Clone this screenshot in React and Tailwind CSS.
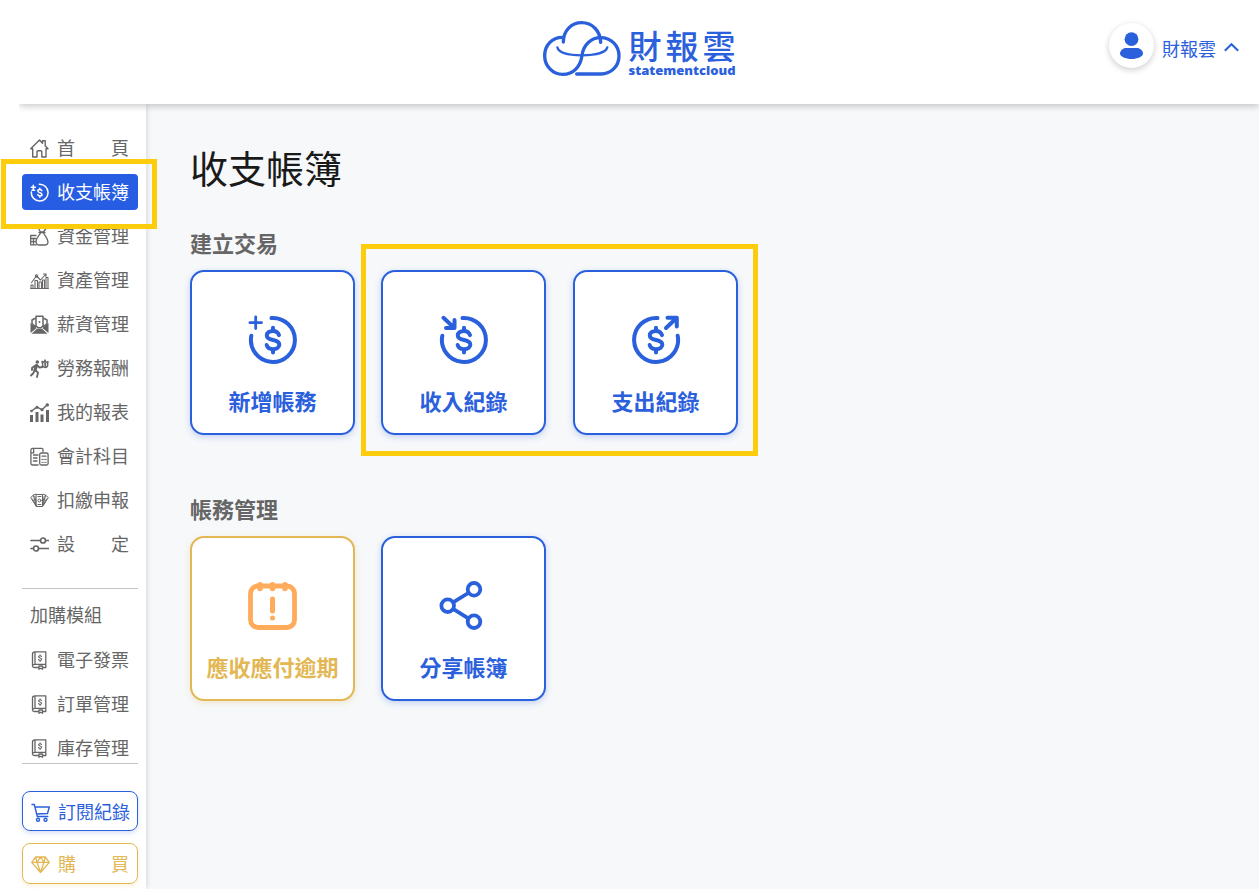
import React, { useState } from 'react';

// ===== Sidebar icons (19 x 19) =====
function Icon({ children, width = 1.4 }) {
  return (
    <svg className="h-[19px] w-[19px] shrink-0" viewBox="0.5 0 19 19" fill="none" stroke="currentColor"
      strokeWidth={width} strokeLinecap="round" strokeLinejoin="round" aria-hidden="true">
      {children}
    </svg>
  );
}

const HomeIcon = () => (
  <Icon>
    <path d="M3.200 9.800H1.200L10 1l3 3.200V1.800h2.700v5l2.800 3h-2V18h-4.200v-5.200c0-.6-.4-1-1-1H8.500c-.6 0-1 .4-1 1V18H3.200z" />
  </Icon>
);

const LedgerIcon = () => (
  <Icon width={1.5}>
    <path d="M9.800 1.200a8.400 8.400 0 1 1-8 7.800" />
    <path d="M1.800 4.200h4M3.800 2.200v4M2.500 7.300h2.600" />
    <path d="M12.300 7.700c-.4-.8-1.100-1.100-2-1.100-1.200 0-2 .6-2 1.500 0 2.100 4.200 1 4.200 3.300 0 .9-.9 1.500-2.100 1.500-1 0-1.800-.4-2.200-1.200M10.300 5.300v1.200M10.300 13v1.200" />
  </Icon>
);

const FundIcon = () => (
  <Icon width={1.3}>
    <path d="M9 1.500l2 3.500h3l2.500-3.500M9.500 5.500h6M11 6c-1.500 3-4.500 5-4.500 8.500 0 2.500 1.500 3.500 3.500 3.500h5c2 0 3.500-1 3.500-3 0-3.500-3-6-4.500-9" />
    <path d="M6.500 8.500H1.200v9.300h5.500M1.200 11.500h5M1.200 14.600h5M4 11.500v6" />
  </Icon>
);

const AssetIcon = () => (
  <Icon width={1.1}>
    <path d="M1 17.500h18M1.500 17v-3h2v3M5.500 17V9.500H8V17M9.500 17v-6H12v6M13 17V9h2v8M16.500 17V6.500h2V17" />
    <path d="M2 11.500L7 5l4 4 5.500-6M14 3h2.500v2.500" />
    <circle cx="7" cy="5" r="1.200" />
  </Icon>
);

const SalaryIcon = () => (
  <Icon width={1.5}>
    <path d="M1 8l6.200 5L1 18zM19 8l-6.200 5 6.200 5zM2 18.800l5.500-5h5l5.500 5z" fill="currentColor" stroke="none" />
    <path d="M6.500 1.300h7v9.500l-2 2h-3l-2-2zM5.200 3.500L2.500 5v3.500l3.200 3M14.800 3.500L17.500 5v3.500l-3.200 3" />
    <circle cx="10" cy="7" r="1" fill="currentColor" stroke="none" />
  </Icon>
);

const LaborIcon = () => (
  <Icon>
    <circle cx="7.800" cy="3" r="1.800" fill="currentColor" stroke="none" />
    <path d="M7 6.500L5.500 11" strokeWidth="3.200" />
    <path d="M5 11.500L4 14l-2.500 2.500M6 11.500l2.500 2-1 4.500M5 7L2.500 9v2M8 6.500l2 2 3-.5" strokeWidth="1.800" />
    <path d="M13 4.500l-.5-2 2 1 1-2.500 1.200 2.500 1.800-1-.3 2.500c.3 2-.7 3.500-2.500 3.500S12.700 7 13 4.500z" />
    <path d="M15.700 4.500v2.500" strokeWidth="1.800" />
  </Icon>
);

const ReportIcon = () => (
  <Icon>
    <path d="M.5 12h3v7h-3zM6 9h3v10H6zM11 11.500h3V19h-3zM16.500 7h3v12h-3z" fill="currentColor" stroke="none" />
    <path d="M2 8l5.500-3.800 5 2.500L18 1.500" strokeWidth="1.500" />
    <circle cx="2" cy="8" r="1.300" fill="currentColor" stroke="none" />
    <circle cx="7.500" cy="4.200" r="1.500" fill="currentColor" stroke="none" />
    <circle cx="12.500" cy="6.700" r="1.500" fill="currentColor" stroke="none" />
    <circle cx="17.800" cy="1.900" r="1.700" fill="currentColor" stroke="none" />
  </Icon>
);

const AccountIcon = () => (
  <Icon width={1.3}>
    <path d="M8.500 18H3.200c-1.100 0-1.800-.7-1.800-1.800V5.500M13.500 4.500V2.800c0-.8-.6-1.400-1.400-1.400H3c-1 0-1.600.8-1.600 1.800v2.600h2.800V3.200c0-1-.3-1.600-1-1.800M4 8h4.500M4 11h3.500M4 14h3.500" />
    <rect x="10.200" y="6" width="8.400" height="12" rx="1.500" />
    <path d="M12.500 9.200h4M12.500 12.500h.2M14.400 12.500h.2M16.300 12.500h.2M12.500 15.300h.2M14.400 15.300h.2M16.300 15.300h.2" />
  </Icon>
);

const WithholdIcon = () => (
  <Icon width={1}>
    <path d="M7 3.500h6v12H7zM6.500 3.200l-2.700.8 3 11M13.500 3.200l2.700.8-3 11M3.500 4.500L1.200 6.500l5 8M16.500 4.500l2.300 2-5 8M3 8l3.500 6.500M17 8l-3.500 6.500M5.300 5.500L6.500 11M14.700 5.500L13.500 11" />
    <circle cx="10" cy="9.500" r="1.500" />
    <path d="M8.500 5.500h3M8.500 13.500h3" />
  </Icon>
);

const SettingIcon = () => (
  <Icon width={1.7}>
    <path d="M1.500 5.500h9M16.500 5.500H19M1.500 13.500h2M9.500 13.500H19" />
    <circle cx="13.500" cy="5.500" r="2.500" />
    <circle cx="6.500" cy="13.500" r="2.500" />
  </Icon>
);

const BookIcon = () => (
  <Icon width={1.3}>
    <path d="M5.500.8h10.800v12.500H5.500zM5.500.8C4 .8 3 1.600 3 3v12c0-1.200 1-1.700 2.500-1.700M3 15c0 1 .8 1.500 1.800 1.500h4.500M13.500 16.500h2.800v-3M9.500 15h3.500v3.300l-1.800-1-1.700 1z" />
    <path d="M12 5.500c-.3-.6-.8-.8-1.400-.8-.9 0-1.500.4-1.500 1.100 0 1.600 3 .8 3 2.500 0 .7-.6 1.100-1.500 1.100-.7 0-1.200-.3-1.500-.9M10.600 3.700v1M10.600 9.500v1" strokeWidth="1.100" />
  </Icon>
);

const CartIcon = () => (
  <Icon width={1.4}>
    <path d="M1.500 1.500h2.300l3 12h10.500M4.500 4h14.300L17 10.500 6 11" />
    <circle cx="7.500" cy="16.800" r="1.500" />
    <circle cx="15" cy="16.800" r="1.500" />
  </Icon>
);

const DiamondIcon = () => (
  <Icon width={1.3}>
    <path d="M5.200 2h9.600l4 5.300L10 17.500 1.200 7.300zM1.200 7.300h17.600M5.200 2l1.300 5.300 3.500 10 3.500-10L14.800 2M6.500 7.300L10 2l3.500 5.300" />
  </Icon>
);

// ===== Card icons (50 x 50) =====
function CardIcon({ children }) {
  return (
    <svg className="h-[50px] w-[50px]" viewBox="0.5 0 50 50" fill="none" stroke="currentColor"
      strokeWidth="4" strokeLinecap="round" strokeLinejoin="round" aria-hidden="true">
      {children}
    </svg>
  );
}

const Dollar = () => (
  <path d="M31.500 20.200C30.700 17.600 28.400 16 25.500 16c-3.700 0-6.200 1.800-6.200 4.500 0 6.200 12.500 2.800 12.500 9 0 2.800-2.600 4.700-6.300 4.700-3.200 0-5.600-1.500-6.300-4.200M25.500 12.800V16M25.500 34.500v3" />
);

const AddIcon = () => (
  <CardIcon>
    <path d="M24 3A22 22 0 1 1 3.800 20.800" />
    <path d="M2.400 7.700h11.600M8.200 2v11.500" strokeWidth="2.800" />
    <Dollar />
  </CardIcon>
);

const IncomeIcon = () => (
  <CardIcon>
    <path d="M24 3A22 22 0 1 1 3.800 20.800" />
    <path d="M5 2.800L15 12.300M16 5v8H7.500" strokeWidth="4" />
    <Dollar />
  </CardIcon>
);

const ExpenseIcon = () => (
  <CardIcon>
    <path d="M27 3A22 22 0 1 0 47.200 20.800" />
    <path d="M35.500 13L46 3M37 2.800h9.300v8.700" strokeWidth="4" />
    <Dollar />
  </CardIcon>
);

const OverdueIcon = () => (
  <CardIcon>
    <g className="text-[#ffab5c]" stroke="currentColor">
      <rect x="3" y="5" width="44" height="41.500" rx="7.500" strokeWidth="4.800" />
      <path d="M12.500 3.800v3.800M25 3.800v3.800M37.500 3.800v3.800" strokeWidth="5.400" />
      <path d="M25 18v12M25 37v.1" strokeWidth="5" />
    </g>
  </CardIcon>
);

const ShareIcon = () => (
  <CardIcon>
    <g strokeWidth="3.800">
      <circle cx="9.200" cy="24.700" r="6.300" />
      <circle cx="35.500" cy="8.300" r="6.300" />
      <circle cx="35.500" cy="40.700" r="6.300" />
      <path d="M15 21.200l14.800-9.200M15 28.200l14.800 9.200" />
    </g>
  </CardIcon>
);

// ===== Data =====
const menu = [
  { text: '首頁', icon: HomeIcon },
  { text: '收支帳簿', icon: LedgerIcon },
  { text: '資金管理', icon: FundIcon },
  { text: '資產管理', icon: AssetIcon },
  { text: '薪資管理', icon: SalaryIcon },
  { text: '勞務報酬', icon: LaborIcon },
  { text: '我的報表', icon: ReportIcon },
  { text: '會計科目', icon: AccountIcon },
  { text: '扣繳申報', icon: WithholdIcon },
  { text: '設定', icon: SettingIcon },
];

const modules = ['電子發票', '訂單管理', '庫存管理'];

// Two-character labels are spread over the width of four
function Label({ text }) {
  if (text.length > 2) return <span className="pb-[2px] whitespace-nowrap">{text}</span>;
  return (
    <span className="flex flex-1 justify-between pb-[2px]">
      {[...text].map((ch) => <span key={ch}>{ch}</span>)}
    </span>
  );
}

function Logo() {
  return (
    <a href="#" className="flex items-start gap-[6px] text-[#2b60dc]">
      <svg className="h-[57px] w-[80px]" viewBox="36 30 240 171" fill="none" stroke="currentColor"
        strokeWidth="10" strokeLinecap="round" strokeLinejoin="round" aria-hidden="true">
        <path d="M97 82C66 82 44 106 44 137c0 31 24 56 54 56 34 0 54-25 58-57 4-32 28-53 56-53 31 0 55 24 55 54 0 31-23 55-54 55h-73" />
        <path d="M100 96c0-34 24-58 55-58 32 0 56 25 57 59" />
        <path d="M82 112c4 16 33 24 73 24s73-8 77-24" strokeWidth="7" />
      </svg>
      <span className="flex flex-col pt-[9px]">
        <span className="flex justify-between text-[33px] leading-[32px] font-medium">
          <span>財</span>
          <span>報</span>
          <span>雲</span>
        </span>
        <span className="font-['Open_Sans',sans-serif] text-[13px] leading-[18px] font-extrabold">statementcloud</span>
      </span>
    </a>
  );
}

function Header() {
  return (
    <header className="relative z-10 ml-[19px] grid h-[104px] grid-cols-[1fr_auto_1fr] items-start bg-white px-5 pt-5 shadow-[0_2px_7px_rgba(0,0,0,0.22)] [clip-path:inset(0_0_-14px_0)]">
      <div />
      <Logo />
      <button className="mt-[3px] flex items-center gap-2 justify-self-end text-[#2b60dc]">
        <svg className="h-[45px] w-[45px] rounded-full bg-white shadow-[0_2px_6px_rgba(0,0,0,0.2)]" viewBox="0 0 45 45" fill="currentColor" aria-hidden="true">
          <circle cx="22.500" cy="16.200" r="6.900" />
          <path d="M11 30.500c0-3 3-5.500 6-5.500h11c3 0 6 2.500 6 5.500S28.500 36 22.500 36 11 33.500 11 30.500z" />
        </svg>
        <span className="pt-[6px] text-[18px]">財報雲</span>
        <svg className="mt-1 h-[15px] w-[15px]" viewBox="0 0 15 15" fill="none" stroke="currentColor" strokeWidth="2" aria-hidden="true">
          <path d="M.8 10.800l6.700-6.600 6.700 6.600" />
        </svg>
      </button>
    </header>
  );
}

function Sidebar({ active, setActive }) {
  return (
    <aside className="relative w-[127px] shrink-0 bg-white pt-[26px] pr-2 pb-[5px] pl-[3px] text-[18px] text-[#666] shadow-[3px_0_4px_-1px_rgba(0,0,0,0.1)]">
      <nav className="flex flex-col gap-2">
        {menu.map(({ text, icon: ItemIcon }) => (
          <a
            key={text}
            href="#"
            onClick={() => setActive(text)}
            className={"relative flex h-9 items-center gap-2 rounded pr-[9px] pl-2 " + (active === text ? "z-10 bg-[#265de3] text-white" : "")}
          >
            <ItemIcon />
            <Label text={text} />
            {active === text && (
              <span className="pointer-events-none absolute -top-[15px] -right-[19px] -bottom-[19px] -left-[21px] border-5 border-[#fdcc0c]" />
            )}
          </a>
        ))}
      </nav>

      <hr className="mt-[26px] border-[#c4c4c4]" />
      <h2 className="mt-[10px] pl-2 leading-[30px]">加購模組</h2>
      <nav className="mt-4 flex flex-col gap-[14px]">
        {modules.map((text) => (
          <a key={text} href="#" className="flex h-[30px] items-center gap-2 pr-[9px] pl-2">
            <BookIcon />
            <Label text={text} />
          </a>
        ))}
      </nav>
      <hr className="border-[#c4c4c4]" />

      <div className="mt-[27px] flex flex-col gap-3">
        <button className="flex h-10 items-center gap-2 rounded-lg border border-[#2b60dc] px-2 pt-[2px] text-[#2b60dc] shadow-[0_2px_5px_rgba(43,96,220,0.2)]">
          <CartIcon />
          <Label text="訂閱紀錄" />
        </button>
        <button className="flex h-[41px] items-center gap-2 rounded-lg border border-[#e2b754] px-2 pt-[2px] text-[#e2b754] shadow-[0_2px_5px_rgba(226,183,84,0.2)]">
          <DiamondIcon />
          <Label text="購買" />
        </button>
      </div>
    </aside>
  );
}

function Card({ text, icon: ItemIcon, gold }) {
  return (
    <button
      className={"flex h-[165px] w-[165px] flex-col items-center gap-[19px] rounded-[14px] border-2 bg-white pt-[43px] text-[22px] leading-[32px] font-bold whitespace-nowrap " +
        (gold
          ? "border-[#e2b754] text-[#e2b754] shadow-[0_2px_6px_rgba(226,183,84,0.25)]"
          : "border-[#2b60dc] text-[#2b60dc] shadow-[0_2px_6px_rgba(43,96,220,0.25)]")}
    >
      <ItemIcon />
      {text}
    </button>
  );
}

export default function App() {
  const [active, setActive] = useState('收支帳簿');

  return (
    <div className="flex min-h-screen flex-col bg-white font-['Noto_Sans_CJK_TC',sans-serif]">
      <Header />
      <div className="ml-[19px] flex flex-1">
        <Sidebar active={active} setActive={setActive} />

        <main className="flex-1 bg-[#f6f8fa] pt-9 pl-11">
          <h1 className="text-[38px] leading-[54px] text-[#1a1a1a]">收支帳簿</h1>

          <section className="mt-8">
            <h2 className="mb-3 text-[22px] leading-[32px] font-bold text-[#666]">建立交易</h2>
            <div className="flex gap-[26px]">
              <Card text="新增帳務" icon={AddIcon} />
              <div className="relative flex gap-[27px]">
                <Card text="收入紀錄" icon={IncomeIcon} />
                <Card text="支出紀錄" icon={ExpenseIcon} />
                <span className="pointer-events-none absolute -top-[26px] -right-[20px] -bottom-[21px] -left-[20px] border-5 border-[#fdcc0c]" />
              </div>
            </div>
          </section>

          <section className="mt-[57px]">
            <h2 className="mb-3 text-[22px] leading-[32px] font-bold text-[#666]">帳務管理</h2>
            <div className="flex gap-[26px]">
              <Card text="應收應付逾期" icon={OverdueIcon} gold />
              <Card text="分享帳簿" icon={ShareIcon} />
            </div>
          </section>
        </main>
      </div>
    </div>
  );
}
